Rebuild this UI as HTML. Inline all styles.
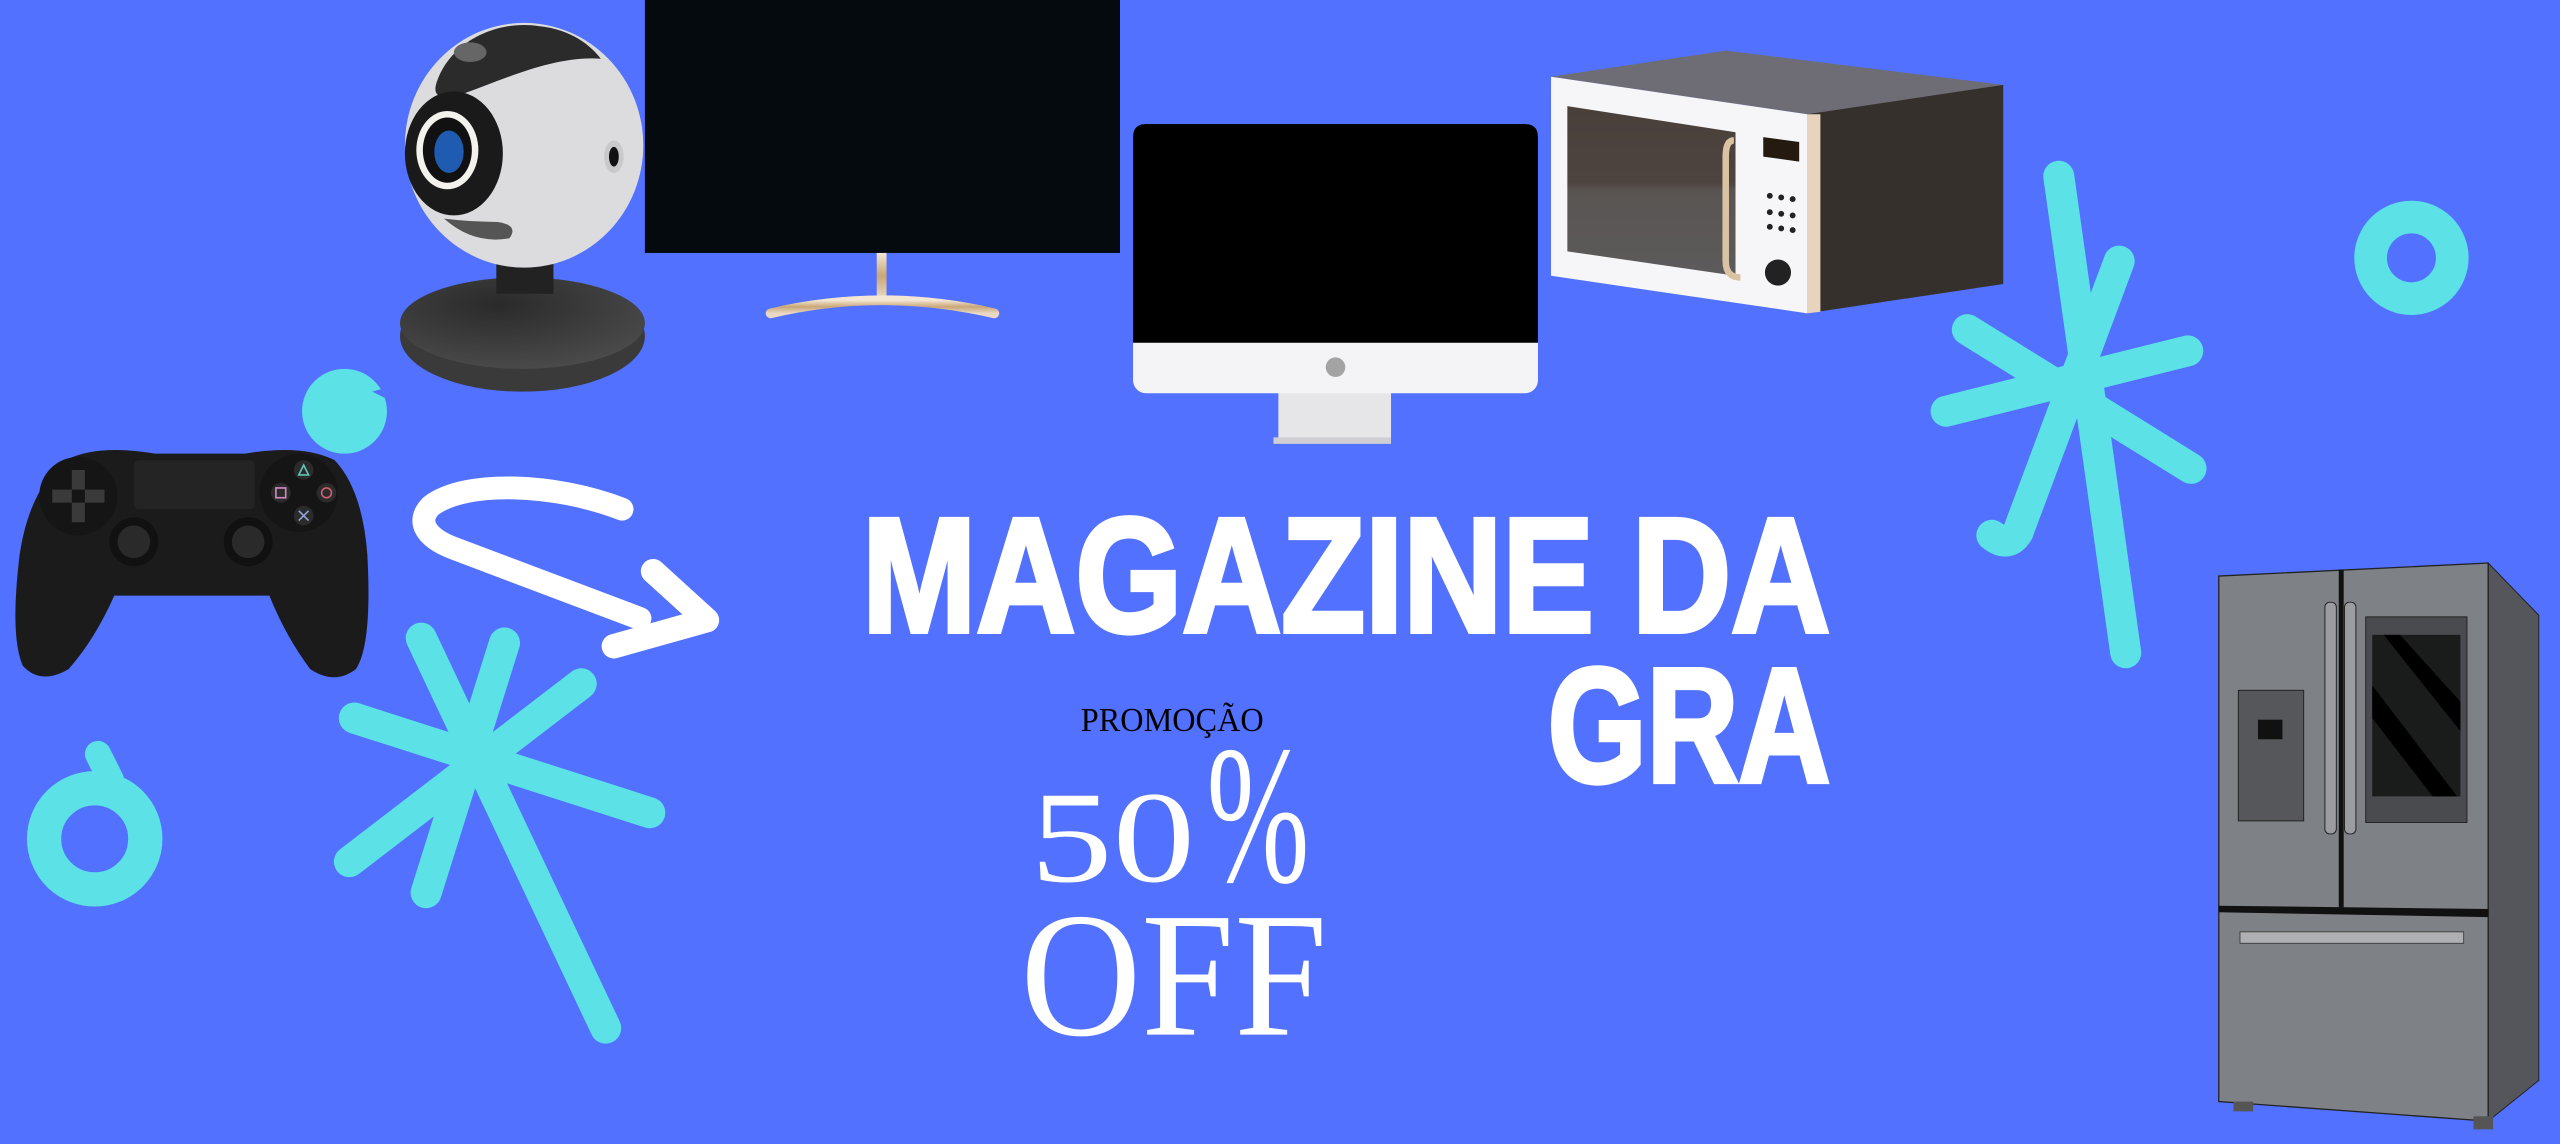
<!DOCTYPE html>
<html><head><meta charset="utf-8">
<style>
html,body{margin:0;padding:0;background:#5271ff;overflow:hidden}
svg{display:block}
</style></head>
<body>
<svg width="2560" height="1144" viewBox="0 0 1568 701" preserveAspectRatio="none" xmlns="http://www.w3.org/2000/svg">
<defs>
<radialGradient id="base" cx="0.4" cy="0.3" r="0.8"><stop offset="0" stop-color="#2a2a2a"/><stop offset="1" stop-color="#4e4e4e"/></radialGradient>
<linearGradient id="gold" x1="0" x2="0" y1="0" y2="1"><stop offset="0" stop-color="#f3e6d4"/><stop offset="0.5" stop-color="#c9a777"/><stop offset="1" stop-color="#e8d8c4"/></linearGradient>
<linearGradient id="mwwin" x1="0" x2="0" y1="0" y2="1"><stop offset="0" stop-color="#4a403a"/><stop offset="0.45" stop-color="#4d4440"/><stop offset="0.5" stop-color="#5a5553"/><stop offset="1" stop-color="#5c5a5b"/></linearGradient>
</defs>
<rect width="1568" height="701" fill="#5271ff"/>

<g stroke="#5ce1e6" stroke-linecap="round" fill="none">
  <g stroke-width="19">
    <line x1="258" y1="391" x2="371" y2="630"/>
    <line x1="217" y1="440" x2="398" y2="498"/>
    <line x1="356" y1="419" x2="214" y2="528"/>
    <line x1="309" y1="394" x2="261" y2="547"/>
    <line x1="1261" y1="108" x2="1302" y2="400"/>
    <line x1="1298" y1="160" x2="1236" y2="326"/>
    <path d="M1236 326 Q1230 336 1220 328"/>
    <line x1="1192" y1="252" x2="1340" y2="215"/>
    <line x1="1205" y1="202" x2="1342" y2="287"/>
  </g>
  <circle cx="58" cy="514" r="31" stroke-width="21"/>
  <path d="M60 462 L68 478" stroke-width="16"/>
  <circle cx="1477" cy="158" r="25" stroke-width="20"/>
</g>
<circle cx="211" cy="252" r="26" fill="#5ce1e6"/>
<path d="M228 240 L242 236 L240 246 Z" fill="#5271ff"/>

<g stroke="#fff" fill="none" stroke-linecap="round" stroke-linejoin="round">
  <path d="M381 312 C340 296 285 294 264 310 C254 320 262 330 278 336 L392 379" stroke-width="14"/>
  <path d="M400 350 L433 380 L376 396" stroke-width="15"/>
</g>

<g>
  <ellipse cx="320" cy="206" rx="75" ry="34" fill="#3a3a3a"/>
  <ellipse cx="320" cy="198" rx="75" ry="28" fill="url(#base)"/>
  <rect x="304" y="158" width="35" height="22" fill="#222"/>
  <ellipse cx="321" cy="89" rx="73" ry="75" fill="#dcdcdf"/>
  <path d="M267 52 C 275 25 305 12 330 16 C 350 18 362 28 368 36 C 340 34 310 48 285 57 C 272 62 265 60 267 52Z" fill="#2b2b2b"/>
  <ellipse cx="288" cy="32" rx="10" ry="6" fill="#666"/>
  <ellipse cx="278" cy="94" rx="30" ry="38" fill="#1a1a1a"/>
  <ellipse cx="274" cy="92" rx="19" ry="24" fill="#f4f2ec"/>
  <ellipse cx="274" cy="92" rx="15" ry="20" fill="#111"/>
  <ellipse cx="275" cy="93" rx="9" ry="13" fill="#1f5bb0"/>
  <path d="M272 134 Q290 150 312 146 Q318 138 305 136 Q288 136 272 134Z" fill="#555"/>
  <ellipse cx="376" cy="96" rx="6" ry="10" fill="#c9c9cc"/>
  <ellipse cx="376" cy="96" rx="3" ry="6" fill="#111"/>
</g>

<rect x="395" y="0" width="291" height="155" fill="#050a0e"/>
<rect x="537" y="155" width="6" height="28" fill="url(#gold)"/>
<path d="M472 192 Q540 176 609 192" stroke="url(#gold)" stroke-width="6" fill="none" stroke-linecap="round"/>

<rect x="783" y="238" width="69" height="32" fill="#e6e6e8"/>
<rect x="780" y="268" width="72" height="4" fill="#cfcfd3"/>
<rect x="694" y="76" width="248" height="165" rx="8" fill="#f4f4f6"/>
<path d="M702 76 H934 Q942 76 942 84 V210 H694 V84 Q694 76 702 76Z" fill="#000"/>
<circle cx="818" cy="225" r="6" fill="#a3a3a3"/>

<polygon points="950,47 1057,31 1227,52 1115,70 1107,70" fill="#6e6d75"/>
<polygon points="1107,70 1227,52 1227,174 1107,192" fill="#36302c"/>
<polygon points="1107,70 1115,70 1115,191 1107,192" fill="#e8d3bd"/>
<polygon points="950,47 1107,70 1107,192 950,169" fill="#f6f6f8"/>
<polygon points="960,65 1063,81 1063,169 960,154" fill="url(#mwwin)"/>
<path d="M1062 86 Q1057 86 1057 96 V160 Q1057 170 1066 170" stroke="#d9c3a3" stroke-width="4" fill="none"/>
<polygon points="1080,84 1102,87 1102,99 1080,96" fill="#241a0f"/>
<g fill="#222">
<circle cx="1084" cy="120" r="1.8"/><circle cx="1091" cy="121" r="1.8"/><circle cx="1098" cy="122" r="1.8"/>
<circle cx="1084" cy="130" r="1.8"/><circle cx="1091" cy="131" r="1.8"/><circle cx="1098" cy="132" r="1.8"/>
<circle cx="1084" cy="139" r="1.8"/><circle cx="1091" cy="140" r="1.8"/><circle cx="1098" cy="141" r="1.8"/>
<circle cx="1089" cy="167" r="8"/>
</g>

<g>
  <path d="M40 282 Q60 272 95 278 L150 278 Q185 272 205 282 Q222 300 225 340 Q228 395 218 410 Q205 420 190 410 Q175 390 165 365 L70 365 Q58 392 42 410 Q25 420 14 408 Q6 390 12 340 Q18 300 40 282Z" fill="#1b1b1b"/>
  <rect x="82" y="282" width="74" height="30" rx="3" fill="#242424"/>
  <circle cx="48" cy="304" r="24" fill="#151515"/>
  <g fill="#3a3a3a"><rect x="44" y="288" width="8" height="12"/><rect x="44" y="308" width="8" height="12"/><rect x="32" y="300" width="12" height="8"/><rect x="52" y="300" width="12" height="8"/></g>
  <circle cx="183" cy="302" r="24" fill="#151515"/>
  <circle cx="186" cy="288" r="6" fill="#2b2b2b"/><circle cx="200" cy="302" r="6" fill="#2b2b2b"/><circle cx="172" cy="302" r="6" fill="#2b2b2b"/><circle cx="186" cy="316" r="6" fill="#2b2b2b"/>
  <path d="M183 291 L186 285 L189 291Z" stroke="#5fc7b0" fill="none" stroke-width="1"/>
  <circle cx="200" cy="302" r="3" stroke="#d06070" fill="none" stroke-width="1"/>
  <rect x="169" y="299" width="6" height="6" stroke="#d08ac0" fill="none" stroke-width="1"/>
  <path d="M183 313 L189 319 M189 313 L183 319" stroke="#8fa4d8" stroke-width="1"/>
  <circle cx="82" cy="332" r="15" fill="#111"/><circle cx="82" cy="332" r="10" fill="#2a2a2a"/>
  <circle cx="152" cy="332" r="15" fill="#111"/><circle cx="152" cy="332" r="10" fill="#2a2a2a"/>
</g>

<g>
  <polygon points="1524,345 1555,377 1555,662 1524,687" fill="#55565b" stroke="#222" stroke-width="0.6"/>
  <polygon points="1359,353 1524,345 1524,687 1359,675" fill="#7e8185" stroke="#222" stroke-width="0.8"/>
  <line x1="1434" y1="349" x2="1434" y2="556" stroke="#111" stroke-width="3"/>
  <polygon points="1359,555 1524,557 1524,562 1359,559" fill="#111"/>
  <rect x="1372" y="571" width="137" height="7" fill="#aeb0b3" stroke="#333" stroke-width="0.5"/>
  <rect x="1449" y="378" width="62" height="126" fill="#4a4b4f" stroke="#222" stroke-width="0.6"/>
  <rect x="1453" y="389" width="54" height="99" fill="#1a1b1b"/>
  <polygon points="1470,389 1507,430 1507,448 1460,389" fill="#000"/>
  <polygon points="1453,420 1505,488 1490,488 1453,440" fill="#000"/>
  <rect x="1371" y="423" width="40" height="80" fill="#55575b" stroke="#222" stroke-width="0.6"/>
  <rect x="1383" y="441" width="15" height="12" fill="#111"/>
  <rect x="1424" y="369" width="7" height="142" rx="3" fill="#9a9ca0" stroke="#222" stroke-width="0.6"/>
  <rect x="1436" y="369" width="7" height="142" rx="3" fill="#9a9ca0" stroke="#222" stroke-width="0.6"/>
  <rect x="1368" y="675" width="12" height="6" fill="#555"/>
  <rect x="1515" y="684" width="12" height="8" fill="#555"/>
</g>

<g fill="#fff" stroke="#fff" stroke-width="3" stroke-linejoin="miter" font-family="'Liberation Sans', Arial, sans-serif" font-weight="700">
  <text x="528" y="387" font-size="100" textLength="593" lengthAdjust="spacingAndGlyphs">MAGAZINE DA</text>
  <text x="948" y="479" font-size="100" textLength="173" lengthAdjust="spacingAndGlyphs">GRA</text>
</g>
<g font-family="'Liberation Serif', 'Times New Roman', serif">
  <text x="662" y="448" font-size="21" fill="#000" textLength="112" lengthAdjust="spacingAndGlyphs">PROMOÇÃO</text>
  <text x="631" y="540" font-size="80" fill="#fff" textLength="101" lengthAdjust="spacingAndGlyphs">50</text>
  <text x="739" y="540" font-size="121" fill="#fff" textLength="63" lengthAdjust="spacingAndGlyphs">%</text>
  <text x="625" y="634" font-size="109" fill="#fff" textLength="188" lengthAdjust="spacingAndGlyphs">OFF</text>
</g>
</svg>
</body></html>
